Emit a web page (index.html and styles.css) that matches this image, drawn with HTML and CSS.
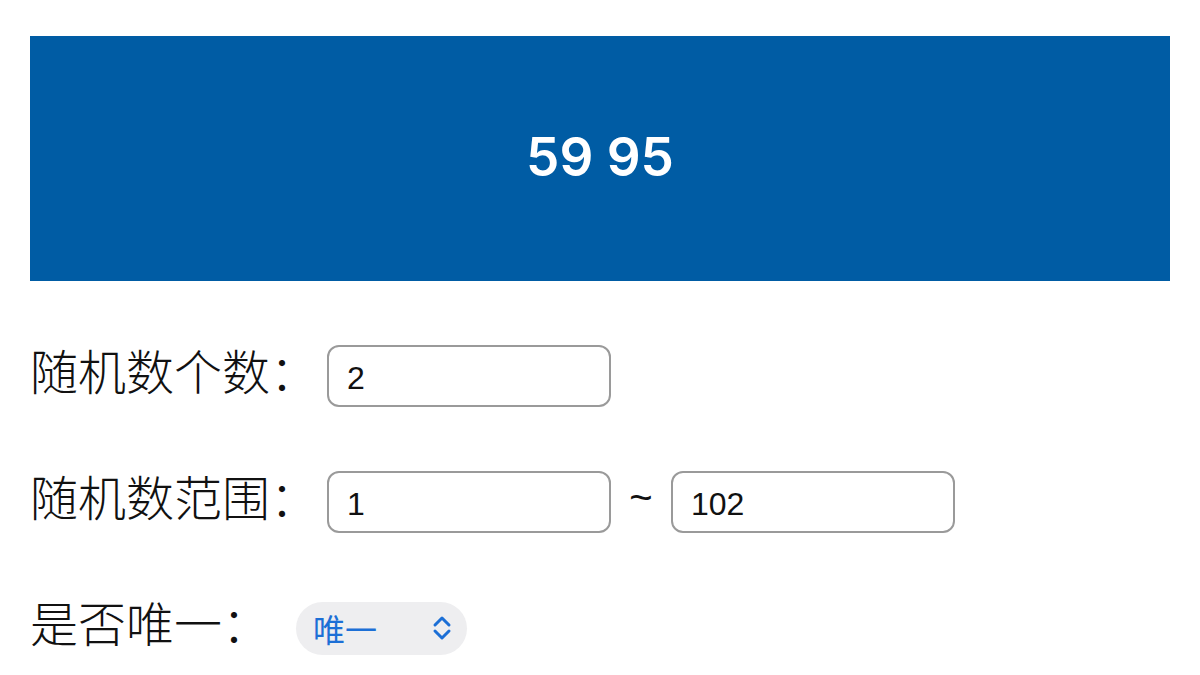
FILE: index.html
```html
<!DOCTYPE html>
<html lang="zh-CN">
<head>
    <meta charset="UTF-8">
    <title>随机数生成器</title>
    <link rel="stylesheet" href="styles.css">
</head>
<body>
    <div class="page">
        <div class="result" id="result">59 95</div>

        <div class="row">
            <label class="label">随机数个数：</label>
            <input class="field" type="text" id="count" value="2">
        </div>

        <div class="row">
            <label class="label">随机数范围：</label>
            <input class="field" type="text" id="min" value="1">
            <span class="tilde">~</span>
            <input class="field" type="text" id="max" value="102">
        </div>

        <div class="row">
            <label class="label label-wide">是否唯一：</label>
            <div class="select">
                <span class="select-text">唯一</span>
                <svg class="chevron" width="22" height="26" viewBox="0 0 22 26" fill="none" stroke="#1c6fd6" stroke-width="3" stroke-linecap="round" stroke-linejoin="round">
                    <path d="M4 10 L11 3 L18 10"/>
                    <path d="M4 16 L11 23 L18 16"/>
                </svg>
            </div>
        </div>
    </div>
</body>
</html>
```

FILE: styles.css
```css
body {
    margin: 0;
    background: #fff;
    font-family: "Noto Sans CJK SC", "Liberation Sans", sans-serif;
    color: #111;
}
.page {
    padding: 36px 30px 0 30px;
}
.result {
    height: 245px;
    background: #005ca4;
    color: #fff;
    display: flex;
    align-items: center;
    justify-content: center;
    font-family: Inter, "Liberation Sans", sans-serif;
    font-weight: 600;
    font-size: 53px;
    padding-bottom: 4px;
    box-sizing: border-box;
}
.row {
    display: flex;
    align-items: center;
    height: 62px;
    margin-top: 64px;
}
.label {
    font-size: 48px;
    font-weight: 300;
    margin-right: 9px;
    line-height: 1;
    padding-bottom: 14px;
}
.label-wide {
    margin-right: 26px;
}
.field {
    width: 284px;
    height: 62px;
    box-sizing: border-box;
    border: 2px solid #9a9a9a;
    border-radius: 12px;
    padding: 4px 18px 0 18px;
    font-family: "Liberation Sans", Arial, sans-serif;
    font-size: 32px;
    color: #111;
    outline: none;
}
.tilde {
    width: 60px;
    text-align: center;
    font-family: "Liberation Sans", Arial, sans-serif;
    font-size: 40px;
    margin-top: -10px;
}
.select {
    display: flex;
    align-items: center;
    justify-content: space-between;
    width: 171px;
    height: 53px;
    box-sizing: border-box;
    padding: 0 14px 0 17px;
    background: #eeeef0;
    border-radius: 27px;
}
.select-text {
    color: #1c6fd6;
    font-size: 32px;
    font-weight: 400;
}
```
